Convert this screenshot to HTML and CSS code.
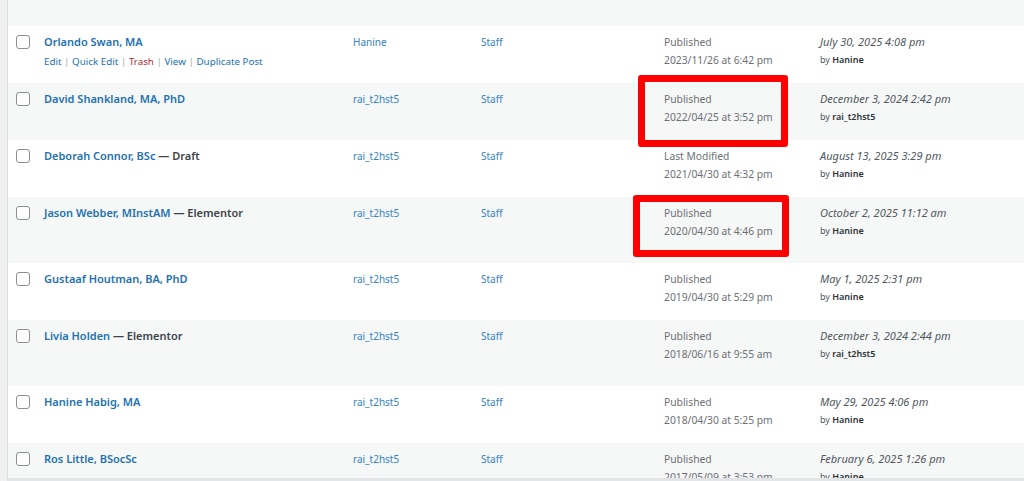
FILE: index.html
```html
<!DOCTYPE html>
<html lang="en">
<head>
    <meta charset="UTF-8">
    <meta name="viewport" content="width=device-width, initial-scale=1.0">
    <title>Team Members</title>
    <link rel="stylesheet" href="styles.css">
</head>
<body>
    <div class="screen">
        <div class="table-wrap">
            <div class="row alt spacer"></div>

            <div class="row">
                <div class="cell check"><span class="box"></span></div>
                <div class="cell title">
                    <a class="row-title" href="#">Orlando Swan, MA</a>
                    <div class="row-actions">
                        <a href="#">Edit</a> <span class="sep">|</span>
                        <a href="#">Quick Edit</a> <span class="sep">|</span>
                        <a href="#" class="trash">Trash</a> <span class="sep">|</span>
                        <a href="#">View</a> <span class="sep">|</span>
                        <a href="#">Duplicate Post</a>
                    </div>
                </div>
                <div class="cell"><a class="plain" href="#">Hanine</a></div>
                <div class="cell"><a class="plain" href="#">Staff</a></div>
                <div class="cell date">Published<br>2023/11/26 at 6:42 pm</div>
                <div class="cell modified"><em>July 30, 2025 4:08 pm</em><small>by <b>Hanine</b></small></div>
            </div>

            <div class="row alt">
                <div class="cell check"><span class="box"></span></div>
                <div class="cell title"><a class="row-title" href="#">David Shankland, MA, PhD</a></div>
                <div class="cell"><a class="plain" href="#">rai_t2hst5</a></div>
                <div class="cell"><a class="plain" href="#">Staff</a></div>
                <div class="cell date">Published<br>2022/04/25 at 3:52 pm</div>
                <div class="cell modified"><em>December 3, 2024 2:42 pm</em><small>by <b>rai_t2hst5</b></small></div>
            </div>

            <div class="row">
                <div class="cell check"><span class="box"></span></div>
                <div class="cell title"><a class="row-title" href="#">Deborah Connor, BSc</a> <span class="state">— Draft</span></div>
                <div class="cell"><a class="plain" href="#">rai_t2hst5</a></div>
                <div class="cell"><a class="plain" href="#">Staff</a></div>
                <div class="cell date">Last Modified<br>2021/04/30 at 4:32 pm</div>
                <div class="cell modified"><em>August 13, 2025 3:29 pm</em><small>by <b>Hanine</b></small></div>
            </div>

            <div class="row alt tall">
                <div class="cell check"><span class="box"></span></div>
                <div class="cell title"><a class="row-title" href="#">Jason Webber, MInstAM</a> <span class="state">— Elementor</span></div>
                <div class="cell"><a class="plain" href="#">rai_t2hst5</a></div>
                <div class="cell"><a class="plain" href="#">Staff</a></div>
                <div class="cell date">Published<br>2020/04/30 at 4:46 pm</div>
                <div class="cell modified"><em>October 2, 2025 11:12 am</em><small>by <b>Hanine</b></small></div>
            </div>

            <div class="row">
                <div class="cell check"><span class="box"></span></div>
                <div class="cell title"><a class="row-title" href="#">Gustaaf Houtman, BA, PhD</a></div>
                <div class="cell"><a class="plain" href="#">rai_t2hst5</a></div>
                <div class="cell"><a class="plain" href="#">Staff</a></div>
                <div class="cell date">Published<br>2019/04/30 at 5:29 pm</div>
                <div class="cell modified"><em>May 1, 2025 2:31 pm</em><small>by <b>Hanine</b></small></div>
            </div>

            <div class="row alt tall">
                <div class="cell check"><span class="box"></span></div>
                <div class="cell title"><a class="row-title" href="#">Livia Holden</a> <span class="state">— Elementor</span></div>
                <div class="cell"><a class="plain" href="#">rai_t2hst5</a></div>
                <div class="cell"><a class="plain" href="#">Staff</a></div>
                <div class="cell date">Published<br>2018/06/16 at 9:55 am</div>
                <div class="cell modified"><em>December 3, 2024 2:44 pm</em><small>by <b>rai_t2hst5</b></small></div>
            </div>

            <div class="row">
                <div class="cell check"><span class="box"></span></div>
                <div class="cell title"><a class="row-title" href="#">Hanine Habig, MA</a></div>
                <div class="cell"><a class="plain" href="#">rai_t2hst5</a></div>
                <div class="cell"><a class="plain" href="#">Staff</a></div>
                <div class="cell date">Published<br>2018/04/30 at 5:25 pm</div>
                <div class="cell modified"><em>May 29, 2025 4:06 pm</em><small>by <b>Hanine</b></small></div>
            </div>

            <div class="row alt">
                <div class="cell check"><span class="box"></span></div>
                <div class="cell title"><a class="row-title" href="#">Ros Little, BSocSc</a></div>
                <div class="cell"><a class="plain" href="#">rai_t2hst5</a></div>
                <div class="cell"><a class="plain" href="#">Staff</a></div>
                <div class="cell date">Published<br>2017/05/09 at 3:53 pm</div>
                <div class="cell modified"><em>February 6, 2025 1:26 pm</em><small>by <b>Hanine</b></small></div>
            </div>
        </div>

        <!-- red highlight boxes drawn on top of the screenshot -->
        <div class="mark mark-one"></div>
        <div class="mark mark-two"></div>
    </div>
</body>
</html>
```

FILE: styles.css
```css
* {
    margin: 0;
    padding: 0;
    box-sizing: border-box;
}

body {
    font-family: "Noto Sans", "Open Sans", sans-serif;
    font-size: 11px;
    color: #50575e;
    background: #f0f0f1;
    overflow: hidden;
}

a {
    text-decoration: none;
}

.screen {
    position: relative;
    height: 481px;
    padding-left: 7px;
}

.table-wrap {
    height: 481px;
    overflow: hidden;
    background: #fff;
    border-left: 1px solid #dcdcde;
    border-bottom: 3px solid #e2e4e7;
}

.row {
    display: grid;
    grid-template-columns: 36px 309px 128px 183px 156px 1fr;
    min-height: 57px;
    padding-top: 7px;
    background: #fff;
    line-height: 18px;
}

.row.alt {
    background: #f6f7f7;
}

.row.tall {
    min-height: 66px;
}

.row.spacer {
    min-height: 26px;
    height: 26px;
    padding: 0;
}

.cell.check {
    padding: 2px 0 0 8px;
}

.box {
    display: block;
    width: 14px;
    height: 14px;
    border: 1px solid #8c8f94;
    border-radius: 3px;
    background: #fff;
}

.row-title {
    color: #2271b1;
    font-weight: 600;
    font-size: 11px;
}

.state {
    color: #3c434a;
    font-weight: 600;
    font-size: 11px;
}

.row-actions {
    margin-top: 2px;
    font-size: 9.8px;
    color: #a7aaad;
}

.row-actions a {
    color: #2271b1;
}

.row-actions a.trash {
    color: #b32d2e;
}

.plain {
    color: #3582c4;
    font-size: 10px;
}

.date {
    color: #6c7075;
    font-size: 10.3px;
}

.modified em {
    display: block;
    color: #50575e;
    font-size: 11px;
}

.modified small {
    display: block;
    font-size: 9px;
    color: #50575e;
}

.modified b {
    color: #2c3338;
    font-weight: 600;
}

/* annotation boxes */
.mark {
    position: absolute;
    border: 7px solid #ff0000;
    border-radius: 3px;
}

.mark-one {
    left: 638px;
    top: 75px;
    width: 150px;
    height: 72px;
}

.mark-two {
    left: 633px;
    top: 195px;
    width: 156px;
    height: 62px;
}
```
